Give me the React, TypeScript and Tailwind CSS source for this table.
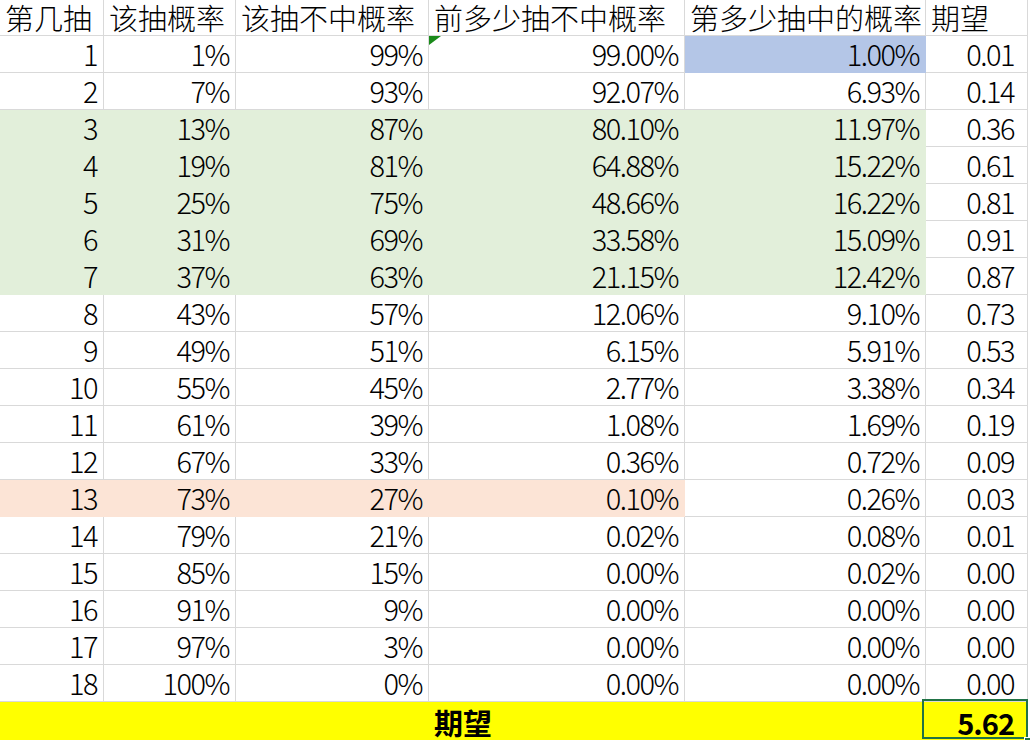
import React from "react";

type Row = [string, string, string, string, string, string];

const rows: Row[] = [
  ["1", "1%", "99%", "99.00%", "1.00%", "0.01"],
  ["2", "7%", "93%", "92.07%", "6.93%", "0.14"],
  ["3", "13%", "87%", "80.10%", "11.97%", "0.36"],
  ["4", "19%", "81%", "64.88%", "15.22%", "0.61"],
  ["5", "25%", "75%", "48.66%", "16.22%", "0.81"],
  ["6", "31%", "69%", "33.58%", "15.09%", "0.91"],
  ["7", "37%", "63%", "21.15%", "12.42%", "0.87"],
  ["8", "43%", "57%", "12.06%", "9.10%", "0.73"],
  ["9", "49%", "51%", "6.15%", "5.91%", "0.53"],
  ["10", "55%", "45%", "2.77%", "3.38%", "0.34"],
  ["11", "61%", "39%", "1.08%", "1.69%", "0.19"],
  ["12", "67%", "33%", "0.36%", "0.72%", "0.09"],
  ["13", "73%", "27%", "0.10%", "0.26%", "0.03"],
  ["14", "79%", "21%", "0.02%", "0.08%", "0.01"],
  ["15", "85%", "15%", "0.00%", "0.02%", "0.00"],
  ["16", "91%", "9%", "0.00%", "0.00%", "0.00"],
  ["17", "97%", "3%", "0.00%", "0.00%", "0.00"],
  ["18", "100%", "0%", "0.00%", "0.00%", "0.00"],
];

const widths = ["w-[104px]", "w-[132px]", "w-[193px]", "w-[256px]", "w-[241px]", "w-[102px]"];
const headers = ["第几抽", "该抽概率", "该抽不中概率", "前多少抽不中概率", "第多少抽中的概率", "期望"];

function cellFill(r: number, c: number): string {
  if (r >= 3 && r <= 7 && c <= 4) return "bg-[#e2efda] border-[#e2efda]";
  if (r === 13 && c <= 3) return "bg-[#fce4d6] border-[#fce4d6]";
  if (r === 1 && c === 4) return "bg-[#b4c6e7] border-[#b4c6e7]";
  return "bg-white border-[#d9d9d9]";
}

export default function App() {
  return (
    <div className="w-[1030px] h-[740px] overflow-hidden bg-white text-black font-['Noto_Sans_CJK_SC','Noto_Sans',sans-serif] text-[29px] font-light">
      <div className="flex h-[36px]">
        {headers.map((h, i) => (
          <div
            key={i}
            className={`${widths[i]} shrink-0 h-full border-r border-b border-[#d9d9d9] pl-[5px] leading-[34px] whitespace-nowrap`}
          >
            {h}
          </div>
        ))}
      </div>
      {rows.map((row, ri) => {
        const r = ri + 1;
        return (
          <div key={r} className="flex h-[37px]">
            {row.map((v, c) => (
              <div
                key={c}
                className={`${widths[c]} ${cellFill(r, c)} relative shrink-0 h-full border-r border-b text-right leading-[34px] tracking-[-1.5px] whitespace-nowrap ${c === 5 ? "pr-[13px]" : "pr-[6px]"}`}
              >
                {r === 1 && c === 3 && (
                  <svg className="absolute left-0 top-0" width="12" height="9" viewBox="0 0 12 9">
                    <polygon points="0,0 12,0 0,9" fill="#1a8a1a" />
                  </svg>
                )}
                {v}
              </div>
            ))}
          </div>
        );
      })}
      <div className="flex h-[39px] bg-[#ffff00] w-[1028px]">
        <div className="w-[926px] shrink-0 h-full text-center font-bold leading-[34px] pt-[3px]">期望</div>
        <div className="w-[102px] shrink-0 h-full relative text-right font-bold leading-[34px] pt-[3px] pr-[14px] tracking-[-1px]">
          5.62
          <div className="absolute left-[-4px] top-[-3px] w-[106px] h-[40px] border-2 border-[#217346]"></div>
          <div className="absolute right-[-3px] bottom-[-3px] w-[7px] h-[7px] bg-[#217346] border border-white"></div>
        </div>
      </div>
    </div>
  );
}
